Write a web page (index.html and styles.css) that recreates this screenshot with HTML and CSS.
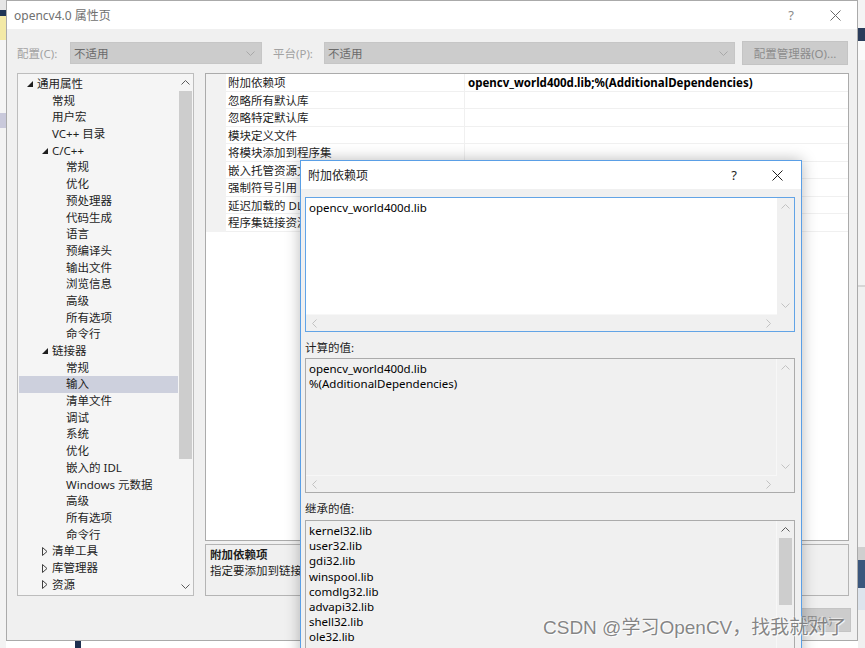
FILE: index.html
```html
<!DOCTYPE html>
<html lang="zh-CN">
<head>
<meta charset="utf-8">
<title>opencv4.0 属性页</title>
<link rel="stylesheet" href="styles.css">
</head>
<body>
<div class="strip-left"></div>
<div class="center">
  <div class="window">
    <div class="titlebar">
      <span class="title">opencv4.0 属性页</span>
      <span class="tb-help">?</span>
      <svg class="tb-close" width="11" height="11" viewBox="0 0 11 11"><path d="M0.5 0.5 L10.5 10.5 M10.5 0.5 L0.5 10.5" stroke="#6a6a6a" stroke-width="1" fill="none"/></svg>
    </div>
    <div class="toolbar">
      <span class="lbl lbl1">配置(C):</span>
      <div class="combo combo1"><span>不适用</span><svg width="9" height="5" viewBox="0 0 9 5"><polyline points="0.5,0.5 4.5,4.5 8.5,0.5" stroke="#a8a8a8" fill="none"/></svg></div>
      <span class="lbl lbl2">平台(P):</span>
      <div class="combo combo2"><span>不适用</span><svg width="9" height="5" viewBox="0 0 9 5"><polyline points="0.5,0.5 4.5,4.5 8.5,0.5" stroke="#a8a8a8" fill="none"/></svg></div>
      <div class="btn cfgmgr">配置管理器(O)...</div>
    </div>
    <div class="content">
      <div class="tree">
        <ul class="tree-list">
          <li class="l0"><svg class="tri" width="6" height="6" viewBox="0 0 6 6"><polygon points="6,0 6,6 0,6" fill="#1e1e1e"/></svg>通用属性</li>
          <li class="l1">常规</li>
          <li class="l1">用户宏</li>
          <li class="l1">VC++ 目录</li>
          <li class="l1 exp"><svg class="tri" width="6" height="6" viewBox="0 0 6 6"><polygon points="6,0 6,6 0,6" fill="#1e1e1e"/></svg>C/C++</li>
          <li class="l2">常规</li>
          <li class="l2">优化</li>
          <li class="l2">预处理器</li>
          <li class="l2">代码生成</li>
          <li class="l2">语言</li>
          <li class="l2">预编译头</li>
          <li class="l2">输出文件</li>
          <li class="l2">浏览信息</li>
          <li class="l2">高级</li>
          <li class="l2">所有选项</li>
          <li class="l2">命令行</li>
          <li class="l1 exp"><svg class="tri" width="6" height="6" viewBox="0 0 6 6"><polygon points="6,0 6,6 0,6" fill="#1e1e1e"/></svg>链接器</li>
          <li class="l2">常规</li>
          <li class="l2 sel">输入</li>
          <li class="l2">清单文件</li>
          <li class="l2">调试</li>
          <li class="l2">系统</li>
          <li class="l2">优化</li>
          <li class="l2">嵌入的 IDL</li>
          <li class="l2">Windows 元数据</li>
          <li class="l2">高级</li>
          <li class="l2">所有选项</li>
          <li class="l2">命令行</li>
          <li class="l1 exp"><svg class="tri" width="6" height="9" viewBox="0 0 6 9"><polygon points="0.5,0.5 5,4.5 0.5,8.5" fill="none" stroke="#404040"/></svg>清单工具</li>
          <li class="l1 exp"><svg class="tri" width="6" height="9" viewBox="0 0 6 9"><polygon points="0.5,0.5 5,4.5 0.5,8.5" fill="none" stroke="#404040"/></svg>库管理器</li>
          <li class="l1 exp"><svg class="tri" width="6" height="9" viewBox="0 0 6 9"><polygon points="0.5,0.5 5,4.5 0.5,8.5" fill="none" stroke="#404040"/></svg>资源</li>
        </ul>
        <div class="tree-scroll">
          <div class="arrow"><svg width="9" height="5" viewBox="0 0 9 5"><polyline points="0.5,4.5 4.5,0.5 8.5,4.5" stroke="#5a5a5a" fill="none"/></svg></div>
          <div class="track"><div class="thumb tree-thumb"></div></div>
          <div class="arrow"><svg width="9" height="5" viewBox="0 0 9 5"><polyline points="0.5,0.5 4.5,4.5 8.5,0.5" stroke="#5a5a5a" fill="none"/></svg></div>
        </div>
      </div>
      <div class="right-col">
        <div class="grid">
          <div class="row"><span class="gutter"></span><span class="name">附加依赖项</span><span class="val bold">opencv_world400d.lib;%(AdditionalDependencies)</span></div>
          <div class="row"><span class="gutter"></span><span class="name">忽略所有默认库</span><span class="val"></span></div>
          <div class="row"><span class="gutter"></span><span class="name">忽略特定默认库</span><span class="val"></span></div>
          <div class="row"><span class="gutter"></span><span class="name">模块定义文件</span><span class="val"></span></div>
          <div class="row"><span class="gutter"></span><span class="name">将模块添加到程序集</span><span class="val"></span></div>
          <div class="row"><span class="gutter"></span><span class="name">嵌入托管资源文件</span><span class="val"></span></div>
          <div class="row"><span class="gutter"></span><span class="name">强制符号引用</span><span class="val"></span></div>
          <div class="row"><span class="gutter"></span><span class="name">延迟加载的 DLL</span><span class="val"></span></div>
          <div class="row"><span class="gutter"></span><span class="name">程序集链接资源</span><span class="val"></span></div>
        </div>
        <div class="desc">
          <div class="desc-title">附加依赖项</div>
          <div class="desc-text">指定要添加到链接命令行的附加项。[例如 kernel32.lib]</div>
        </div>
      </div>
    </div>
    <div class="buttons">
      <div class="btn btn-ok">确定</div>
      <div class="btn btn-ok">取消</div>
      <div class="btn">应用(A)</div>
    </div>
  </div>
  <div class="strip-bottom"></div>
</div>
<div class="strip-right"></div>

<div class="dialog">
  <div class="dlg-title">
    <span class="title dark">附加依赖项</span>
    <span class="dlg-help">?</span>
    <svg class="dlg-close" width="11" height="11" viewBox="0 0 11 11"><path d="M0.5 0.5 L10.5 10.5 M10.5 0.5 L0.5 10.5" stroke="#1e1e1e" stroke-width="1" fill="none"/></svg>
  </div>
  <div class="dlg-body">
    <div class="sbox focus">
      <div class="sb-content white">opencv_world400d.lib</div>
      <div class="vbar">
        <div class="arrow"><svg width="9" height="5" viewBox="0 0 9 5"><polyline points="0.5,4.5 4.5,0.5 8.5,4.5" stroke="#c2c2c2" fill="none"/></svg></div>
        <div class="track"></div>
        <div class="arrow"><svg width="9" height="5" viewBox="0 0 9 5"><polyline points="0.5,0.5 4.5,4.5 8.5,0.5" stroke="#c2c2c2" fill="none"/></svg></div>
      </div>
      <div class="hbar">
        <div class="harrow"><svg width="5" height="9" viewBox="0 0 5 9"><polyline points="4.5,0.5 0.5,4.5 4.5,8.5" stroke="#c2c2c2" fill="none"/></svg></div>
        <div class="harrow"><svg width="5" height="9" viewBox="0 0 5 9"><polyline points="0.5,0.5 4.5,4.5 0.5,8.5" stroke="#c2c2c2" fill="none"/></svg></div>
      </div>
      <div class="corner"></div>
    </div>
    <div class="dlg-label">计算的值:</div>
    <div class="sbox">
      <div class="sb-content">opencv_world400d.lib<br>%(AdditionalDependencies)</div>
      <div class="vbar">
        <div class="arrow"><svg width="9" height="5" viewBox="0 0 9 5"><polyline points="0.5,4.5 4.5,0.5 8.5,4.5" stroke="#c2c2c2" fill="none"/></svg></div>
        <div class="track"></div>
        <div class="arrow"><svg width="9" height="5" viewBox="0 0 9 5"><polyline points="0.5,0.5 4.5,4.5 8.5,0.5" stroke="#c2c2c2" fill="none"/></svg></div>
      </div>
      <div class="hbar">
        <div class="harrow"><svg width="5" height="9" viewBox="0 0 5 9"><polyline points="4.5,0.5 0.5,4.5 4.5,8.5" stroke="#c2c2c2" fill="none"/></svg></div>
        <div class="harrow"><svg width="5" height="9" viewBox="0 0 5 9"><polyline points="0.5,0.5 4.5,4.5 0.5,8.5" stroke="#c2c2c2" fill="none"/></svg></div>
      </div>
      <div class="corner"></div>
    </div>
    <div class="dlg-label last">继承的值:</div>
    <div class="sbox tall">
      <div class="sb-content">kernel32.lib<br>user32.lib<br>gdi32.lib<br>winspool.lib<br>comdlg32.lib<br>advapi32.lib<br>shell32.lib<br>ole32.lib</div>
      <div class="vbar">
        <div class="arrow"><svg width="9" height="5" viewBox="0 0 9 5"><polyline points="0.5,4.5 4.5,0.5 8.5,4.5" stroke="#5a5a5a" fill="none"/></svg></div>
        <div class="track"><div class="thumb box-thumb"></div></div>
        <div class="arrow"><svg width="9" height="5" viewBox="0 0 9 5"><polyline points="0.5,0.5 4.5,4.5 8.5,0.5" stroke="#5a5a5a" fill="none"/></svg></div>
      </div>
    </div>
  </div>
</div>

<div class="watermark">CSDN @学习OpenCV，找我就对了</div>
</body>
</html>
```

FILE: styles.css
```css
* { box-sizing: border-box; }

body {
  margin: 0;
  width: 865px;
  height: 648px;
  overflow: hidden;
  position: relative;
  display: flex;
  background: #ffffff;
  font-family: "Noto Sans", "Noto Sans CJK SC", sans-serif;
  font-size: 11.5px;
  color: #1e1e1e;
}

.strip-left {
  width: 6px;
  flex: none;
  background: linear-gradient(to bottom, #e6e6e6 0 10px, #1f3556 10px 16px, #f3e9a6 16px 40px, #f5f5f5 40px 113px, #c9c9db 113px 128px, #f3f3f3 128px);
}

.center {
  width: 852px;
  flex: none;
  display: flex;
  flex-direction: column;
}

.strip-bottom {
  flex: 1;
  background: linear-gradient(to right, #ffffff 0 69px, #1d2f50 69px 75px, #ffffff 75px);
}

.strip-right {
  width: 7px;
  flex: none;
  background: linear-gradient(to bottom, #f4f4f4 0 28px, #2b3d5b 28px 41px, #fafafa 41px 60px, #f3f3f3 60px 285px, #d6d6d6 285px 287px, #f0f0f0 287px 547px, #cfcfcf 547px 560px, #3b577d 560px 588px, #dde4ed 588px 610px, #f0f0f0 610px);
}

/* main window */
.window {
  height: 641px;
  border: 1px solid #aaaaaa;
  background: #f0f0f0;
  display: flex;
  flex-direction: column;
}

.titlebar {
  height: 28px;
  flex: none;
  background: #ffffff;
  display: flex;
  align-items: center;
  padding-left: 7px;
}

.title {
  font-size: 12px;
  color: #707070;
}

.title.dark { color: #1e1e1e; }

.tb-help {
  margin-left: auto;
  font-size: 13px;
  color: #8a8a8a;
}

.tb-close {
  margin-left: 36px;
  margin-right: 16px;
}

.toolbar {
  margin-top: 12px;
  height: 24px;
  flex: none;
  display: flex;
  align-items: center;
  padding-left: 10px;
}

.lbl {
  color: #a2a2a2;
  flex: none;
}

.lbl1 { width: 53px; }
.lbl2 { width: 51px; margin-left: 11px; }

.combo {
  height: 22px;
  flex: none;
  background: #cccccc;
  border: 1px solid #c6c6c6;
  display: flex;
  align-items: center;
  justify-content: space-between;
  padding: 0 6px 0 3px;
  color: #6a6a6a;
}

.combo1 { width: 192px; }
.combo2 { width: 411px; }

.btn {
  height: 24px;
  flex: none;
  background: #cccccc;
  border: 1px solid #c4c4c4;
  color: #8c8c8c;
  display: flex;
  align-items: center;
  justify-content: center;
}

.cfgmgr {
  width: 106px;
  margin-left: 7px;
}

.content {
  margin-top: 8px;
  height: 523px;
  flex: none;
  display: flex;
  padding-left: 10px;
}

/* tree */
.tree {
  width: 177px;
  flex: none;
  border: 1px solid #bdbdbd;
  background: #f5f5f5;
  display: flex;
}

.tree-list {
  list-style: none;
  margin: 0;
  padding: 2px 0 0 0;
  width: 160px;
  flex: none;
}

.tree-list li {
  height: 16.7px;
  line-height: 16.7px;
  display: flex;
  align-items: center;
  white-space: nowrap;
}

.tree-list .l0 { padding-left: 9px; }
.tree-list .l1 { padding-left: 34px; }
.tree-list .l1.exp { padding-left: 24px; }
.tree-list .l2 { padding-left: 48px; }

.tree-list .tri {
  margin-right: 4px;
  flex: none;
}

.tree-list .sel {
  background: #cdd0dd;
  margin-left: 1px;
  padding-left: 47px;
}

.tree-scroll {
  width: 15px;
  flex: none;
  display: flex;
  flex-direction: column;
}

.arrow {
  height: 17px;
  flex: none;
  display: flex;
  align-items: center;
  justify-content: center;
}

.track {
  flex: 1;
  position: relative;
}

.thumb {
  background: #cdcdcd;
}

.tree-thumb {
  height: 368px;
  margin: 0 1px;
}

/* property grid */
.right-col {
  width: 644px;
  flex: none;
  margin-left: 11px;
  display: flex;
  flex-direction: column;
}

.grid {
  height: 468px;
  flex: none;
  border: 1px solid #ababab;
  background: #ffffff;
}

.row {
  height: 17.5px;
  display: flex;
  line-height: 17px;
}

.gutter {
  width: 20px;
  flex: none;
  background: #f2f2f2;
}

.name {
  width: 239px;
  flex: none;
  padding-left: 2px;
  border-bottom: 1px solid #f0f0f0;
  border-right: 1px solid #f0f0f0;
  white-space: nowrap;
  overflow: hidden;
}

.val {
  flex: 1;
  padding-left: 3px;
  border-bottom: 1px solid #f0f0f0;
  white-space: nowrap;
}

.bold { font-weight: bold; color: #000; }

.desc {
  margin-top: 3px;
  height: 52px;
  flex: none;
  border: 1px solid #b4b4b4;
  padding: 2px 4px;
  line-height: 16px;
}

.desc-title { font-weight: bold; }

.buttons {
  margin-top: 12px;
  height: 24px;
  flex: none;
  display: flex;
  justify-content: flex-end;
  gap: 7px;
  padding-right: 6px;
}

.buttons .btn { width: 75px; }

.buttons .btn-ok {
  background: #e1e1e1;
  border-color: #adadad;
  color: #000;
}

/* dialog */
.dialog {
  position: absolute;
  left: 300px;
  top: 160px;
  width: 502px;
  height: 520px;
  border: 1px solid #5a9fe6;
  background: #f0f0f0;
  box-shadow: 0 0 14px rgba(0, 0, 0, 0.28);
  display: flex;
  flex-direction: column;
}

.dlg-title {
  height: 28px;
  flex: none;
  background: #ffffff;
  display: flex;
  align-items: center;
  padding-left: 7px;
}

.dlg-help {
  margin-left: auto;
  font-size: 13px;
  color: #1e1e1e;
}

.dlg-close {
  margin-left: 35px;
  margin-right: 18px;
}

.dlg-body {
  padding: 8px 6px 0 4px;
  display: flex;
  flex-direction: column;
}

.dlg-label {
  margin-top: 8px;
  margin-bottom: 2px;
  height: 16px;
  line-height: 16px;
  color: #1e1e1e;
}

.dlg-label.last { margin-bottom: 3px; }

.sbox {
  height: 135px;
  flex: none;
  border: 1px solid #ababab;
  display: grid;
  grid-template-columns: 1fr 17px;
  grid-template-rows: 1fr 17px;
  background: #f0f0f0;
}

.sbox.focus { border-color: #62a4e6; }

.sbox.tall {
  height: 200px;
  grid-template-rows: 1fr;
}

.sb-content {
  padding: 2px 3px;
  line-height: 15.2px;
  color: #000;
  overflow: hidden;
  white-space: nowrap;
  border-right: 1px solid #f7f7f7;
}

.sb-content.white {
  background: #ffffff;
  border-right: none;
}

.vbar {
  display: flex;
  flex-direction: column;
  background: #f0f0f0;
}

.box-thumb {
  height: 67px;
  margin: 0 2px;
}

.hbar {
  display: flex;
  justify-content: space-between;
  background: #f0f0f0;
  border-top: 1px solid #f7f7f7;
}

.harrow {
  width: 17px;
  display: flex;
  align-items: center;
  justify-content: center;
}

.corner { background: #f0f0f0; }

.watermark {
  position: absolute;
  left: 543px;
  top: 615px;
  font-family: "Liberation Sans", "Noto Sans CJK SC", sans-serif;
  font-size: 19px;
  line-height: 26px;
  white-space: nowrap;
  color: rgba(112, 112, 112, 0.85);
  text-shadow: 1px 1px 1px rgba(255, 255, 255, 0.9), -1px -1px 1px rgba(255, 255, 255, 0.6);
}
```
